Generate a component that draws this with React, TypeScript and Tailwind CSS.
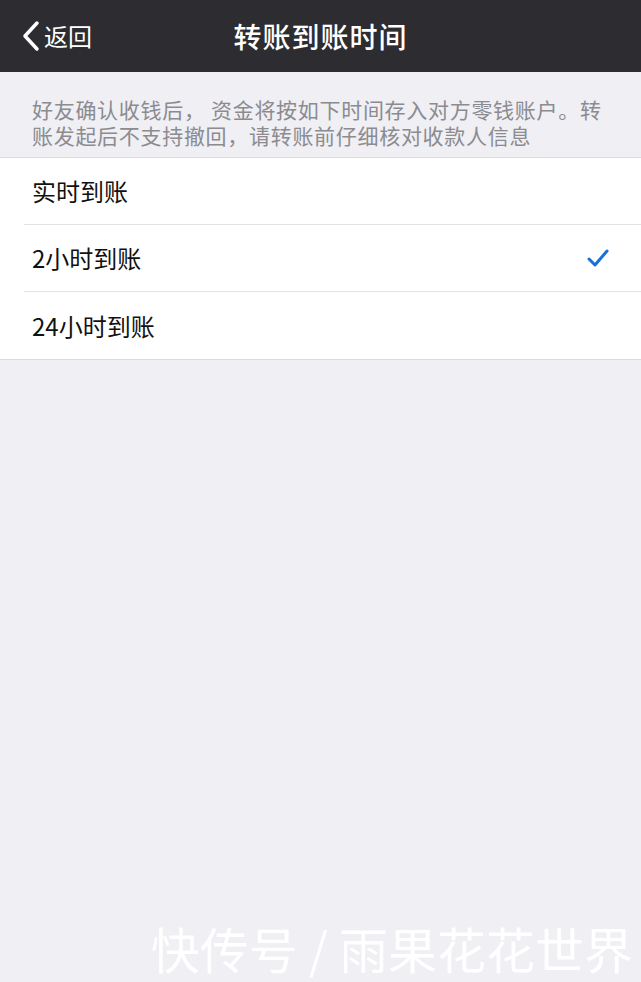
export default function App() {
  const options = [
    { label: "实时到账", checked: false },
    { label: "2小时到账", checked: true },
    { label: "24小时到账", checked: false },
  ];

  return (
    <div
      className="relative flex h-[982px] w-[641px] flex-col overflow-hidden bg-[#efeff4]"
      style={{ fontFamily: '"Noto Sans CJK SC", "Noto Sans", sans-serif' }}
    >
      {/* nav bar */}
      <div className="relative flex h-[72px] shrink-0 items-center justify-center bg-[#2d2d31]">
        <div className="absolute left-[20px] top-0 flex h-full items-center text-white">
          <svg width="22" height="32" viewBox="0 0 22 32" fill="none">
            <path
              d="M17 3 L5 16 L17 29"
              stroke="white"
              strokeWidth="3.5"
              strokeLinecap="round"
              strokeLinejoin="round"
            />
          </svg>
          <span className="ml-[2px] text-[24px] leading-none">返回</span>
        </div>
        <h1 className="text-[28px] font-medium leading-none tracking-[1px] text-white">
          转账到账时间
        </h1>
      </div>

      {/* description */}
      <p className="pb-[9px] pl-[32px] pr-[28px] pt-[24px] text-[21px] leading-[26px] tracking-[0.7px] text-[#8b8b90]">
        好友确认收钱后， 资金将按如下时间存入对方零钱账户。转账发起后不支持撤回，请转账前仔细核对收款人信息
      </p>

      {/* options */}
      <div className="border-y border-[#dcdce0] bg-white">
        {options.map((opt, i) => (
          <div key={opt.label} className="pl-[24px]">
            <div
              className={`flex h-[67px] items-center justify-between pl-[8px] pr-[32px] ${
                i < options.length - 1 ? "border-b border-[#e2e2e6]" : ""
              }`}
            >
              <span className="text-[24px] leading-none text-[#111]">{opt.label}</span>
              {opt.checked && (
                <svg width="22" height="18" viewBox="0 0 22 18" fill="none">
                  <path
                    d="M2 10 L8 16 L20 2"
                    stroke="#1a6fd8"
                    strokeWidth="3"
                    strokeLinecap="round"
                    strokeLinejoin="round"
                  />
                </svg>
              )}
            </div>
          </div>
        ))}
      </div>

      {/* watermark */}
      <div className="absolute bottom-[10px] right-[8px] whitespace-nowrap text-[49px] leading-none text-white/95">
        快传号 / 雨果花花世界
      </div>
    </div>
  );
}
